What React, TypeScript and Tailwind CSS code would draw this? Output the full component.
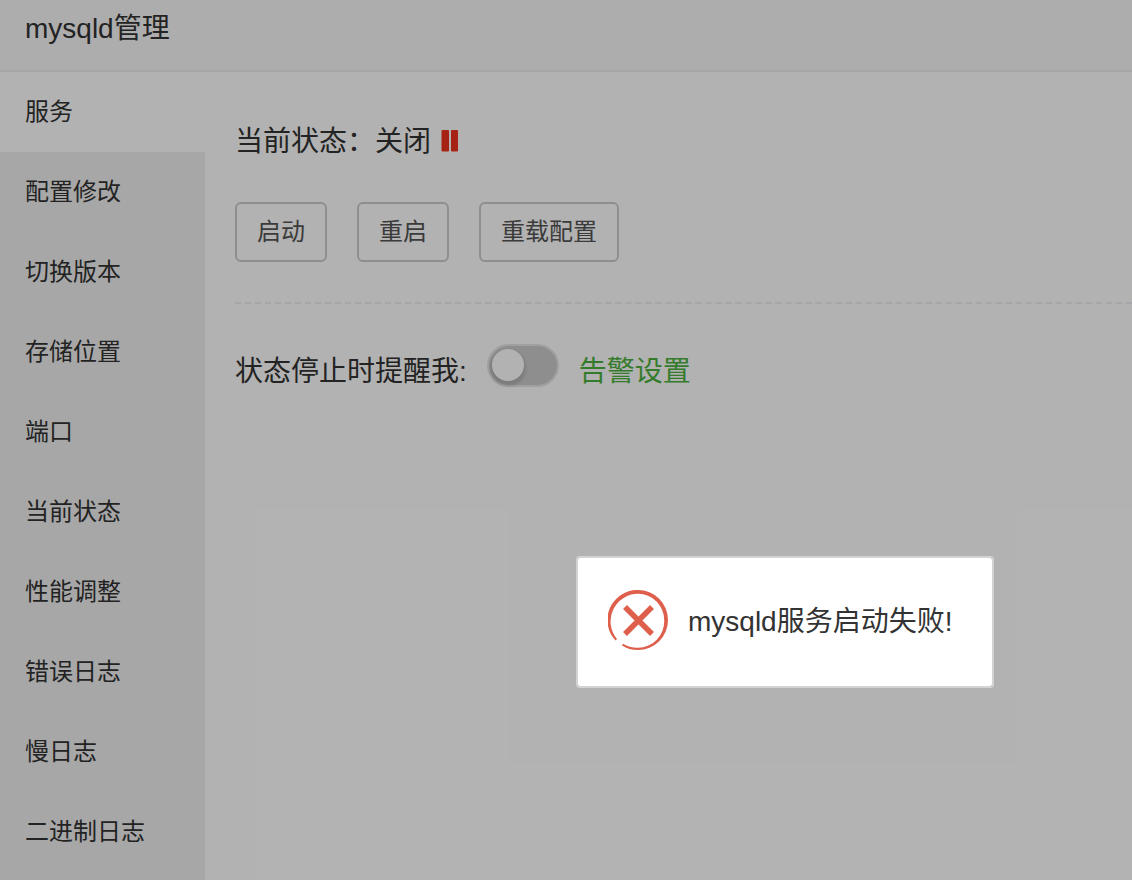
import { useState } from 'react';
import clsx from 'clsx';

const MENU = [
  '服务',
  '配置修改',
  '切换版本',
  '存储位置',
  '端口',
  '当前状态',
  '性能调整',
  '错误日志',
  '慢日志',
  '二进制日志',
];

const ACTIONS = ['启动', '重启', '重载配置'];

const PauseIcon = () => (
  <svg width="18" height="24" viewBox="0 0 18 24" fill="#ed321e" aria-hidden="true">
    <rect x="0.5" y="0" width="7.5" height="21.5" rx="1" />
    <rect x="10" y="0" width="7" height="21.5" rx="1" />
  </svg>
);

// ring gets thinner towards the gap at the lower left
const ErrorIcon = () => (
  <svg width="60" height="60" viewBox="0 0 60 60" fill="none" stroke="#dd5f4c" aria-hidden="true" className="shrink-0">
    <path
      d="M7.5 50.5A30 30 0 0 1 30 0A30 30 0 0 1 60 30A30 30 0 0 1 30 60Q21 60 14 55.5L15 53.8Q22 58 30 57.8A26.5 26.5 0 0 0 56.2 30A26.2 26.2 0 0 0 30 3.8A27.5 27.5 0 0 0 9 49Z"
      fill="#dd5f4c"
      stroke="none"
    />
    <path d="M17 17L44 44M44 17L17 44" strokeWidth="5.5" />
  </svg>
);

const Toast = ({ message }: { message: string }) => (
  <div
    role="alert"
    className="absolute left-[576px] top-[556px] flex items-start gap-5 rounded-sm border-2 border-[#d3d3d3] bg-white bg-clip-padding py-8 pr-10 pl-[30px] text-[28px] text-[#333]"
  >
    <ErrorIcon />
    <span className="leading-16 whitespace-nowrap">{message}</span>
  </div>
);

const ServicePanel = () => {
  const [notify, setNotify] = useState(false);

  return (
    <section className="min-w-0 flex-1 pt-[50px] pl-[30px]">
      <div className="flex h-10 items-center text-[28px]">
        <span>当前状态：</span>
        <span className="mr-[10px]">关闭</span>
        <PauseIcon />
      </div>

      <div className="mt-10 flex gap-[30px] border-b-2 border-dashed border-[#ececf4] pb-10">
        {ACTIONS.map(label => (
          <button
            key={label}
            type="button"
            className="h-[60px] rounded-md border-2 border-[#ccc] bg-white px-5 text-2xl text-[#555]"
          >
            {label}
          </button>
        ))}
      </div>

      <div className="flex items-start pt-10 text-[28px]">
        <label htmlFor="notify" className="mr-5 leading-14">状态停止时提醒我:</label>
        <input
          id="notify"
          type="checkbox"
          role="switch"
          checked={notify}
          onChange={e => setNotify(e.target.checked)}
          className="mr-5 h-[43px] w-[72px] shrink-0 appearance-none rounded-full border-2 border-[#e6e6e6] bg-[#ccc] p-[3px] before:block before:size-8 before:rounded-full before:bg-white before:shadow-[0_3px_3px_2px_rgba(0,0,0,0.12)] checked:bg-[#4db140] checked:before:ml-auto"
        />
        <a href="#alarm" className="leading-14 text-[#4db140]">告警设置</a>
      </div>
    </section>
  );
};

const App = () => {
  const [active, setActive] = useState('服务');

  return (
    <div className="relative flex min-h-screen flex-col overflow-hidden bg-white font-['Liberation_Sans','Noto_Sans_CJK_SC',sans-serif] text-[#333]">
      <header className="border-b-2 border-[#eee] bg-[#f8f8f8] pb-3 pl-[25px]">
        <h1 className="text-[28px] leading-[58px]">mysqld管理</h1>
      </header>

      <main className="flex flex-1">
        <nav className="w-[205px] shrink-0 bg-[#f0f0f0]">
          {MENU.map(item => (
            <button
              key={item}
              type="button"
              onClick={() => setActive(item)}
              className={clsx('block h-20 w-full pl-[25px] text-left text-2xl', active === item && 'bg-white')}
            >
              {item}
            </button>
          ))}
        </nav>
        <ServicePanel />
      </main>

      <div className="absolute inset-0 bg-black/30" />
      <Toast message="mysqld服务启动失败!" />
    </div>
  );
};

export default App;
